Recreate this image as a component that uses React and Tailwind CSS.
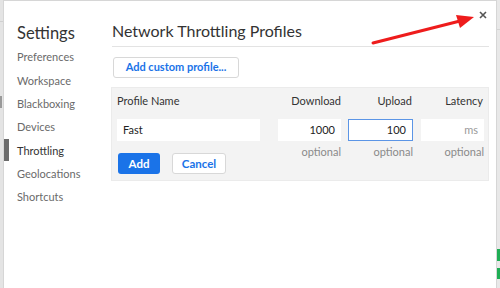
const navItems = [
  "Preferences",
  "Workspace",
  "Blackboxing",
  "Devices",
  "Throttling",
  "Geolocations",
  "Shortcuts",
];

function Field({ value, placeholder, focused, right, w }) {
  return (
    <div
      className={`${w} h-[22px] bg-white flex items-center px-[6px] text-[11px] ${
        right ? "justify-end" : "justify-start"
      } ${focused ? "border border-[#5b95e6]" : ""}`}
    >
      {value ? (
        <span className="text-[#222]">{value}</span>
      ) : (
        <span className="text-[#9a9a9a]">{placeholder}</span>
      )}
    </div>
  );
}

export default function App() {
  return (
    <div
      className="w-[500px] h-[288px] overflow-hidden relative flex bg-[#ececec]"
      style={{ fontFamily: 'Lato, "Open Sans", sans-serif' }}
    >
      {/* page behind the dialog */}
      <div className="w-[3px] flex flex-col bg-[#e4e4e4]">
        <div className="h-[22px] border-b border-[#d0d0d0]" />
        <div className="h-[74px]" />
        <div className="h-[12px] bg-[#9a9a9a] w-[2px]" />
      </div>

      <div className="w-[494px] bg-white border-l border-t border-r border-[#d6d6d6] flex">
        {/* sidebar */}
        <div className="w-[108px] flex flex-col">
          <div className="pl-[13px] pt-[22px] h-[45px] text-[16.5px] leading-[20px] text-[#333]">
            Settings
          </div>
          {navItems.map((item) => (
            <div
              key={item}
              className={`h-[23.33px] flex items-center text-[11px] pl-[13px] relative ${
                item === "Throttling" ? "text-[#333]" : "text-[#6a6a6a]"
              }`}
            >
              {item === "Throttling" && (
                <span className="absolute left-0 top-0 w-[5px] h-[22px] bg-[#6b6b6b]" />
              )}
              {item}
            </div>
          ))}
        </div>

        {/* main */}
        <div className="w-[377px] flex flex-col">
          <div className="h-[46px] border-b border-[#e3e3e3] flex items-end pb-[4px] text-[16px] leading-[22px] text-[#333]">
            Network Throttling Profiles
          </div>

          <div className="pt-[10px] pl-[1px] flex">
            <button className="h-[21px] w-[126px] rounded-[3px] border border-[#d8d8d8] bg-white text-[#1a73e8] text-[11px] font-bold">
              Add custom profile...
            </button>
          </div>

          <div className="mt-[9px] -ml-[1px] h-[94px] bg-[#f3f3f3] border border-[#ebebeb] pl-[5px] pr-[4px] pt-[6px]">
            <div className="flex h-[14px] text-[11px] leading-[14px] text-[#333]">
              <div className="w-[143px]">Profile Name</div>
              <div className="w-[63px] ml-[18px] text-right">Download</div>
              <div className="w-[65px] ml-[7px] text-right pr-[1px]">Upload</div>
              <div className="w-[63px] ml-[8px] text-right pr-[1px]">Latency</div>
            </div>

            <div className="flex mt-[11px]">
              <Field w="w-[143px]" value="Fast" />
              <div className="ml-[18px]">
                <Field w="w-[63px]" value="1000" right />
              </div>
              <div className="ml-[7px]">
                <Field w="w-[65px]" value="100" right focused />
              </div>
              <div className="ml-[8px]">
                <Field w="w-[63px]" placeholder="ms" right />
              </div>
            </div>

            <div className="flex">
              <div className="w-[143px] pt-[12px] pl-[1px] flex gap-[12px]">
                <button className="h-[21px] w-[42px] rounded-[3px] bg-[#1a73e8] text-white text-[11.5px] font-bold">
                  Add
                </button>
                <button className="h-[21px] w-[54px] rounded-[3px] border border-[#d8d8d8] bg-white text-[#1a73e8] text-[11.5px] font-bold">
                  Cancel
                </button>
              </div>
              {["w-[63px] ml-[18px]", "w-[65px] ml-[7px]", "w-[63px] ml-[8px]"].map((c, i) => (
                <div
                  key={i}
                  className={`${c} pt-[4px] text-right text-[11px] leading-[14px] text-[#8a8a8a]`}
                >
                  optional
                </div>
              ))}
            </div>
          </div>
        </div>
      </div>

      <div className="w-[3px] flex flex-col bg-[#e8e8e8]">
        <div className="h-[30px] border-b border-[#d4d4d4]" />
        <div className="h-[219px]" />
        <div className="h-[12px] bg-[#1fae55]" />
        <div className="h-[7px]" />
        <div className="h-[11px] bg-[#1fae55]" />
      </div>

      {/* close button */}
      <svg className="absolute left-[479px] top-[11px]" width="8" height="8" viewBox="0 0 8 8">
        <path d="M1 1 L7 7 M7 1 L1 7" stroke="#555" strokeWidth="1.6" />
      </svg>

      {/* annotation arrow */}
      <svg className="absolute left-0 top-0 pointer-events-none" width="500" height="288">
        <line x1="373" y1="43" x2="460" y2="21" stroke="#ee1c1c" strokeWidth="3" strokeLinecap="round" />
        <polygon points="474,17 456,15 460,28" fill="#ee1c1c" />
      </svg>
    </div>
  );
}
